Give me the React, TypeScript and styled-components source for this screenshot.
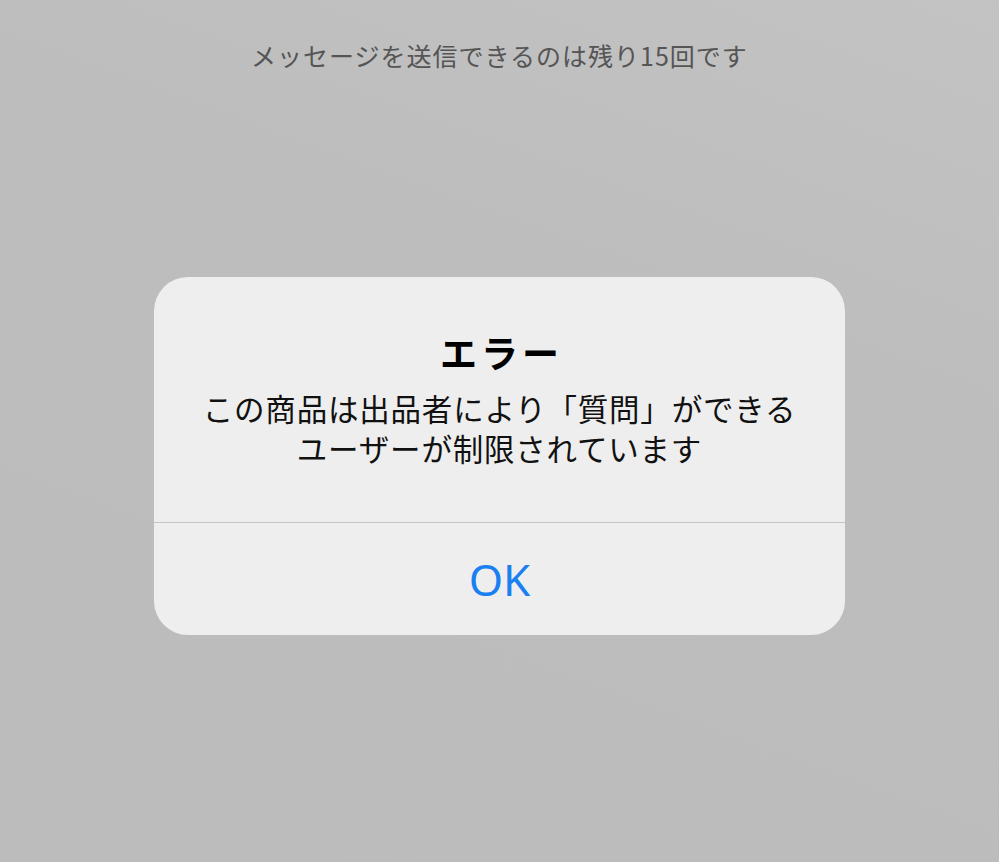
import styled, { createGlobalStyle } from "styled-components"

const GlobalStyle = createGlobalStyle`
    html, body {
        margin: 0;
        padding: 0;
    }
    body {
        font-family: "Noto Sans CJK JP", "Noto Sans", sans-serif;
    }
`;

const Screen = styled.div`
    width: 999px;
    height: 862px;
    box-sizing: border-box;
    padding-top: 39px;
    background: linear-gradient(200deg, #c3c3c3 0%, #bdbdbd 35%, #bcbcbc 100%);
    display: flex;
    flex-direction: column;
    align-items: center;
    overflow: hidden;
`;

const Notice = styled.p`
    margin: 0;
    font-size: 25px;
    line-height: 32px;
    color: #555555;
    letter-spacing: 1px;
`;

const Alert = styled.div`
    margin-top: 206px;
    width: 691px;
    background: #eeeeee;
    border-radius: 34px;
    overflow: hidden;
    display: flex;
    flex-direction: column;
`;

const AlertBody = styled.div`
    padding: 53px 24px 54px;
    display: flex;
    flex-direction: column;
    align-items: center;
    text-align: center;
`;

const Title = styled.h2`
    margin: 0;
    font-size: 37px;
    line-height: 44px;
    font-weight: 700;
    letter-spacing: 4px;
    text-indent: 4px;
    color: #000;
`;

const Message = styled.p`
    margin: 14px 0 0;
    font-size: 30.5px;
    line-height: 40px;
    letter-spacing: 0.8px;
    color: #111;
`;

const Divider = styled.div`
    height: 1px;
    background: #c4c4c4;
`;

const ActionButton = styled.button`
    height: 112px;
    border: none;
    background: transparent;
    font-family: "Noto Sans", "Noto Sans CJK JP", sans-serif;
    font-size: 44px;
    color: #1a7ff0;
    cursor: pointer;
`;

export default function App() {
    return (
        <Screen>
            <GlobalStyle />
            <Notice>メッセージを送信できるのは残り15回です</Notice>
            <Alert>
                <AlertBody>
                    <Title>エラー</Title>
                    <Message>
                        この商品は出品者により「質問」ができる
                        <br />
                        ユーザーが制限されています
                    </Message>
                </AlertBody>
                <Divider />
                <ActionButton>OK</ActionButton>
            </Alert>
        </Screen>
    )
}
